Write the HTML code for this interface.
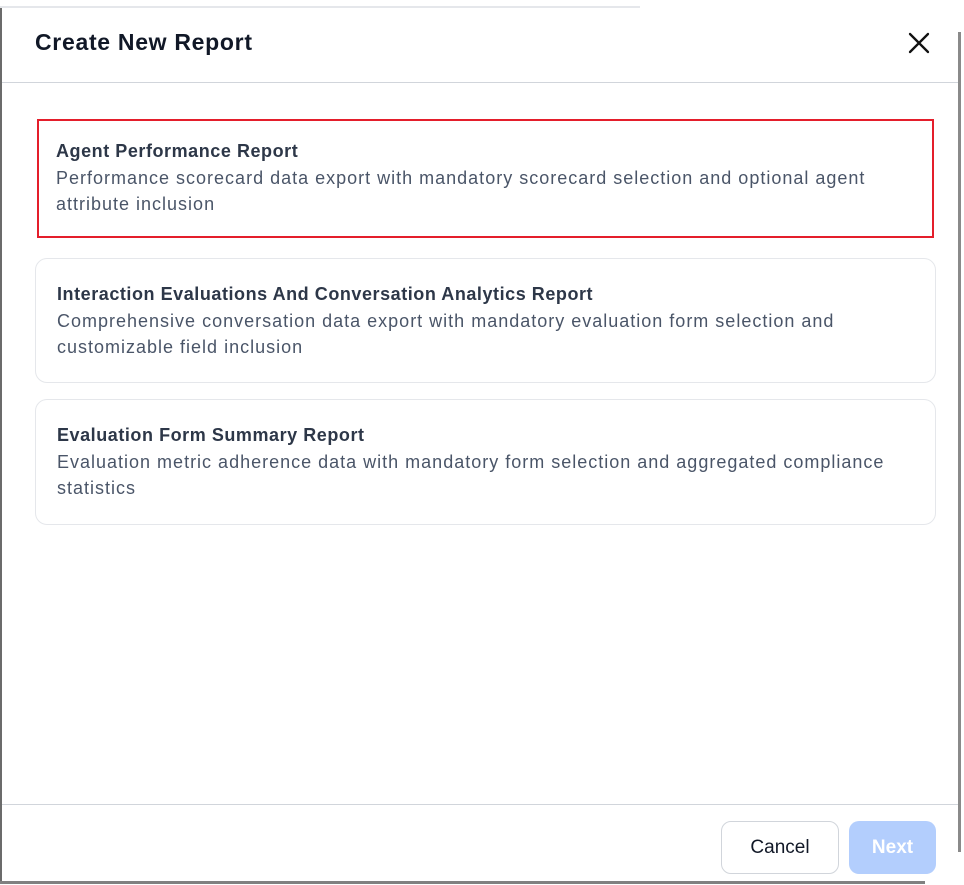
<!DOCTYPE html>
<html><head><style>
*{box-sizing:border-box;margin:0;padding:0}
body{width:964px;height:885px;background:#fff;font-family:"Liberation Sans",Arial,sans-serif;position:relative;overflow:hidden}
.topline{position:absolute;left:0;top:6px;width:640px;height:2px;background:#e5e7eb}
.lb{position:absolute;left:0;top:8px;width:2px;height:876px;background:#6b6b6b}
.bb{position:absolute;left:0;top:881px;width:925px;height:3px;background:#808080}
.rb{position:absolute;left:958px;top:32px;width:3px;height:820px;background:#8a8a8a}
h1{position:absolute;left:35px;top:29px;font-size:23px;font-weight:700;color:#111827;letter-spacing:0.7px}
.x{position:absolute;left:907px;top:31px}
.hd{position:absolute;left:2px;top:82px;width:956px;height:1px;background:#d1d5db}
.card{position:absolute;left:35px;width:901px;border:1px solid #e5e7eb;border-radius:12px;padding:25px 21px}
.card h2{font-size:18px;font-weight:700;color:#2d3748;line-height:22px;margin-top:-1px;letter-spacing:0.55px}
.card p{font-size:18px;color:#4a5568;line-height:26px;letter-spacing:1px;margin-top:3px}
.sel{position:absolute;left:37px;top:119px;width:897px;height:119px;border:2px solid #e41e2b}
.fd{position:absolute;left:2px;top:804px;width:956px;height:1px;background:#d1d5db}
.btn{position:absolute;top:821px;height:53px;border-radius:10px;font-size:19px;display:flex;align-items:center;justify-content:center}
.c{left:721px;width:118px;border:1px solid #d1d5db;color:#111827;background:#fff}
.n{left:849px;width:87px;background:#b3cefd;color:#fff;font-weight:700}
</style></head><body>
<div class="topline"></div><div class="lb"></div><div class="bb"></div><div class="rb"></div>
<h1>Create New Report</h1>
<svg class="x" width="24" height="24" viewBox="0 0 24 24"><path d="M3 3L21 21M21 3L3 21" stroke="#111" stroke-width="2.3" stroke-linecap="round"/></svg>
<div class="hd"></div>
<div class="card" style="top:117px;height:124px;border:none;padding-top:24px"><h2>Agent Performance Report</h2><p>Performance scorecard data export with mandatory scorecard selection and optional agent attribute inclusion</p></div>
<div class="sel"></div>
<div class="card" style="top:258px;height:125px"><h2>Interaction Evaluations And Conversation Analytics Report</h2><p>Comprehensive conversation data export with mandatory evaluation form selection and customizable field inclusion</p></div>
<div class="card" style="top:399px;height:126px"><h2>Evaluation Form Summary Report</h2><p>Evaluation metric adherence data with mandatory form selection and aggregated compliance statistics</p></div>
<div class="fd"></div>
<div class="btn c">Cancel</div>
<div class="btn n">Next</div>
</body></html>
